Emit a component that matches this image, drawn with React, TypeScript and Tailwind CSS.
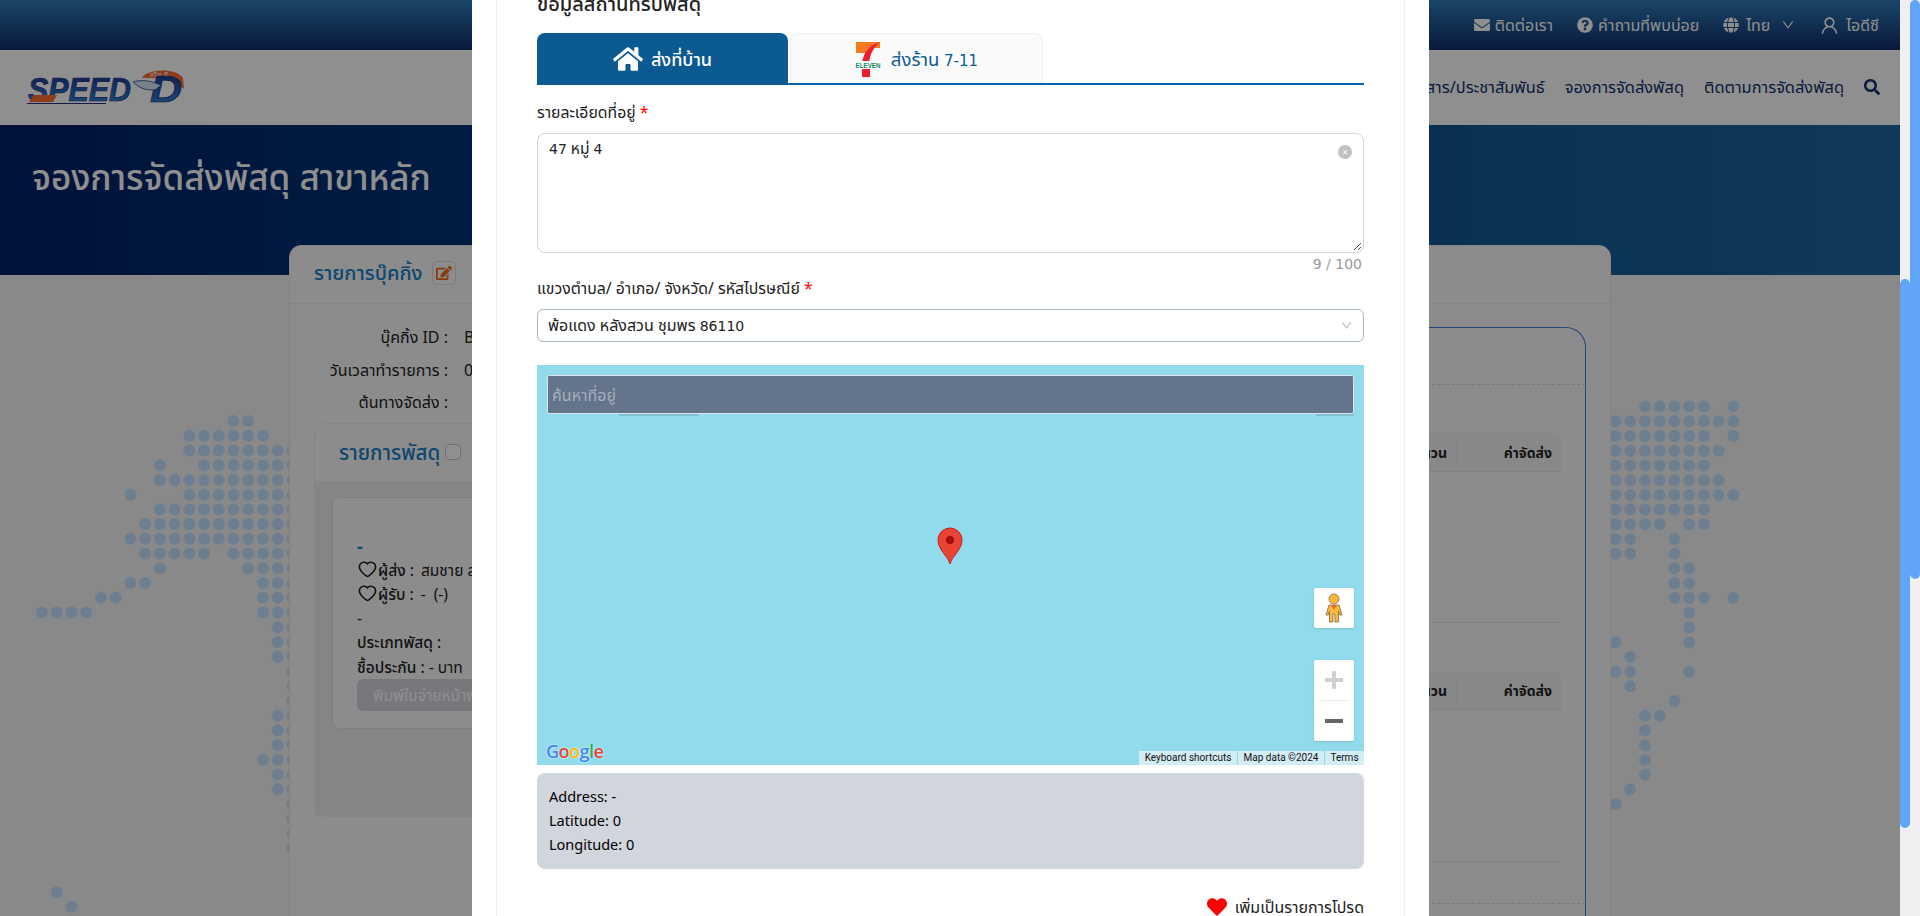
import { FaHome, FaEnvelope, FaQuestionCircle, FaGlobe, FaSearch, FaEdit, FaHeart } from "react-icons/fa";
import { AiOutlineDown, AiOutlineUser, AiOutlineHeart } from "react-icons/ai";

const font = "font-['Noto_Sans','Noto_Sans_Thai','Liberation_Sans',sans-serif]";

const range = (a: number, b: number) => Array.from({ length: b - a + 1 }, (_, i) => a + i);
const leftRows: [number, number[]][] = [
  [0, [13, 14]], [1, range(10, 15)], [2, range(10, 17)], [3, [8, ...range(11, 17)]], [4, range(8, 17)],
  [5, [6, ...range(10, 17)]], [6, range(8, 17)], [7, range(7, 17)], [8, range(6, 17)],
  [9, [...range(7, 11), ...range(13, 17)]], [10, [8, ...range(14, 17)]], [11, [6, 7, 15, 16, 17]],
  [12, [4, 5, 15, 16, 17]], [13, [0, 1, 2, 3, 15, 16, 17]], [14, [16, 17]], [15, [16, 17]], [16, [16, 17]],
  [17, [17]], [18, [17]], [19, [17]], [20, [16, 17]], [21, [16, 17]], [22, [16, 17]], [23, [15, 16, 17]],
  [24, [16, 17]], [25, [16, 17]], [26, [17]], [27, [17]], [28, [17]], [29, [17]], [32, [1]], [33, [2]],
];
const rightRows: [number, number[]][] = [
  [0, [2, 3, 4, 5, 6, 8]], [1, range(0, 8)], [2, [...range(0, 6), 8]], [3, range(0, 7)], [4, range(0, 6)],
  [5, range(0, 7)], [6, range(0, 8)], [7, range(0, 6)], [8, [0, 1, 2, 3, 5, 6]], [9, [0, 1, 4]], [10, [0, 1, 4]],
  [11, [4, 5]], [12, [4, 5]], [13, [4, 5, 6, 8]], [14, [5]], [15, [5]], [16, [0, 5]], [17, [1]], [18, [0, 1, 5]],
  [19, [1]], [20, [4]], [21, [2, 3]], [22, [2]], [23, [2]], [24, [2]], [25, [2]], [26, [1]], [27, [0]],
];

function Dots({ rows, x0, y0 }: { rows: [number, number[]][]; x0: number; y0: number }) {
  return (
    <svg className="absolute left-0 top-0" width="1900" height="916">
      {rows.flatMap(([r, cols]) =>
        cols.map((c) => <circle key={r + "-" + c} cx={x0 + c * 14.73} cy={y0 + r * 14.73} r="6" fill="#c2e3ff" />)
      )}
    </svg>
  );
}

function Logo() {
  return (
    <svg width="160" height="38" viewBox="0 0 160 38">
      <defs>
        <linearGradient id="lg" x1="0" x2="0" y1="0" y2="1">
          <stop offset="0" stopColor="#1f2f86" />
          <stop offset="1" stopColor="#2d8fe0" />
        </linearGradient>
      </defs>
      <path d="M116 9 C120 0 150 -2 157 9 L158 20 L150 14 C142 9 128 9 116 9 Z" fill="#ff6a33" />
      <text x="124" y="7.5" fontSize="6" fill="#fff" fontFamily="Noto Sans, sans-serif">สปีด ดี</text>
      <text x="2" y="32" fontSize="33" fontWeight="700" fontStyle="italic" fill="url(#lg)" stroke="#1f2f86" strokeWidth="0.7" fontFamily="Liberation Sans, sans-serif" textLength="103" lengthAdjust="spacingAndGlyphs">SPEED</text>
      <path d="M3 33 L27 33 L31 26 L8 26 Z" fill="#ff6a33" />
      <path d="M1 34.5 L80 34.5" stroke="#2a2f86" strokeWidth="1.2" />
      <text x="124" y="33" fontSize="36" fontWeight="700" fontStyle="italic" fill="url(#lg)" stroke="#1f2f86" strokeWidth="0.7" fontFamily="Liberation Sans, sans-serif" textLength="32" lengthAdjust="spacingAndGlyphs">D</text>
      <path d="M107 13 C116 10 128 12 136 17 C130 18 132 21 127 21 C118 21 112 18 107 13Z" fill="#d8e4f4" stroke="#2a3f8c" strokeWidth="0.8" />
    </svg>
  );
}

function SevenEleven() {
  return (
    <svg width="26" height="36" viewBox="0 0 26 36">
      <path d="M1 1 H25 V7 H1 Z" fill="#f47b20" />
      <path d="M1 7 H17 L13 12 H1 Z" fill="#f47b20" />
      <path d="M25 1 C20 5 15 12 14 22 H7 C8 14 12 8 18 4 L25 1Z" fill="#ee1c2e" />
      <rect x="7" y="27" width="8" height="9" fill="#ee1c2e" />
      <rect x="0" y="20" width="26" height="8" fill="#fff" />
      <text x="13" y="27" textAnchor="middle" fontSize="7.5" fontWeight="700" fill="#0a8a5c" fontFamily="Liberation Sans, sans-serif" textLength="25" lengthAdjust="spacingAndGlyphs">ELEVEN</text>
    </svg>
  );
}

function Pegman() {
  return (
    <svg width="18" height="30" viewBox="0 0 18 30">
      <circle cx="9" cy="6" r="5" fill="#fdb83c" stroke="#7d6a4a" strokeWidth="0.8" />
      <path d="M4 12 H14 L17 22 L14.5 22 L13.5 18 V29 H10 V21 H8 V29 H4.5 V18 L3.5 22 L1 22 Z" fill="#fdb83c" stroke="#7d6a4a" strokeWidth="0.8" />
      <path d="M6 12 H12 L9 17 Z" fill="#e8702a" />
    </svg>
  );
}

function Pin() {
  return (
    <svg width="28" height="38" viewBox="0 0 28 38">
      <path d="M14 37 C12 29 2 23 2 13 A12 12 0 0 1 26 13 C26 23 16 29 14 37Z" fill="#ea4335" stroke="#c5221f" strokeWidth="1" />
      <circle cx="14" cy="13" r="4.2" fill="#a50e0e" />
    </svg>
  );
}

function Num({ children }: { children: React.ReactNode }) {
  return <span className="font-['DejaVu_Sans',sans-serif] text-[14px]">{children}</span>;
}

function TableHead() {
  return (
    <div className="flex h-[39px] items-center justify-end rounded-t-lg border-b border-[#e4e4e4] bg-[#f2f2f2] text-[14px] font-bold text-[#222]">
      <span className="pr-[9px]">จำนวน</span>
      <span className="flex h-[24px] w-[105px] items-center justify-end border-l border-[#e8e8e8] pr-[9px]">ค่าจัดส่ง</span>
    </div>
  );
}

function Page() {
  return (
    <div className="relative h-[916px] w-[1900px] overflow-hidden bg-[#f5f5f5]">
      <div className="flex h-[50px] items-center justify-end gap-[24px] bg-gradient-to-b from-[#2e7dba] to-[#122e6b] pr-[21px] text-[16px] text-white">
        <span className="flex items-center gap-[5px]"><FaEnvelope className="text-[16px]" /><span>ติดต่อเรา</span></span>
        <span className="flex items-center gap-[5px]"><FaQuestionCircle className="text-[16px]" /><span>คำถามที่พบบ่อย</span></span>
        <span className="flex items-center gap-[7px]">
          <FaGlobe className="text-[16px]" />
          <span>ไทย</span>
          <AiOutlineDown className="ml-[4px] text-[14px]" />
        </span>
        <span className="flex items-center gap-[6px]"><AiOutlineUser className="text-[21px]" /><span>ไอดีซี</span></span>
      </div>
      <div className="flex h-[75px] items-center justify-between bg-white pl-[26px] pr-[20px] text-[16.4px] text-[#12306b]">
        <Logo />
        <div className="flex items-center gap-[20px]">
          <span>ข่าวสาร/ประชาสัมพันธ์</span>
          <span>จองการจัดส่งพัสดุ</span>
          <span>ติดตามการจัดส่งพัสดุ</span>
          <FaSearch className="text-[16px]" />
        </div>
      </div>
      <div className="h-[150px] bg-gradient-to-r from-[#002268] to-[#1b68a3] pl-[32px] pt-[27px] text-[35px] font-medium leading-[50px] text-white">
        จองการจัดส่งพัสดุ สาขาหลัก
      </div>
      <Dots rows={leftRows} x0={42} y0={421} />
      <Dots rows={rightRows} x0={1615.5} y0={406.5} />
      <div className="relative z-10 mx-auto -mt-[30px] h-[800px] w-[1322px] rounded-t-xl border border-[#ececec] bg-[#fafafa]">
        <div className="flex h-[58px] items-center border-b border-[#ececec] pb-[3px] pl-[24px]">
          <span className="text-[20px] font-medium text-[#1a7fc4]">รายการบุ๊คกิ้ง</span>
          <span className="ml-[10px] flex h-[24px] w-[24px] items-center justify-center rounded border border-[#ddd] text-[#f06a1a]">
            <FaEdit className="text-[16px]" />
          </span>
        </div>
        <div className="relative flex">
          <div className="w-[640px] shrink-0 pl-[24px]">
            <div className="grid grid-cols-[134px_1fr] gap-x-[16px] pt-[17px] text-[16px] leading-[32.5px] text-[#222]">
              <span className="text-right">บุ๊คกิ้ง ID :</span>
              <span>B0001</span>
              <span className="text-right">วันเวลาทำรายการ :</span>
              <span>01/01/2024</span>
              <span className="text-right">ต้นทางจัดส่ง :</span>
              <span />
            </div>
            <div className="mt-[4px] h-[394px] rounded-xl border border-[#ececec]">
              <div className="flex h-[57px] items-center gap-[5px] pl-[24px]">
                <span className="text-[20.5px] font-medium text-[#1a7fc4]">รายการพัสดุ</span>
                <span className="h-[16px] w-[16px] rounded border border-[#ccc] bg-white" />
              </div>
              <div className="h-[335px] bg-[#eeeeee] pl-[17px] pt-[16px]">
                <div className="h-[232px] rounded-lg border border-[#e2e2e2] bg-[#fafafa] pl-[24px] pt-[36px] text-[15.5px] leading-[24.3px] text-[#222]">
                  <div className="text-[18px] font-bold leading-[24px] text-[#1a7fc4]">-</div>
                  <div className="flex items-center"><AiOutlineHeart className="text-[21px]" /><span className="font-medium">ผู้ส่ง :</span><span className="ml-[7px]">สมชาย สมชาย</span></div>
                  <div className="flex items-center"><AiOutlineHeart className="text-[21px]" /><span className="font-medium">ผู้รับ :</span><span className="ml-[7px]">-&nbsp; (-)</span></div>
                  <div>-</div>
                  <div className="font-medium">ประเภทพัสดุ :</div>
                  <div><span className="font-medium">ชื้อประกัน :</span> - บาท</div>
                  <button className="h-[32px] rounded-md bg-[#d4d7de] px-[16px] text-[15.5px] text-white">พิมพ์ใบจ่ายหน้าพัสดุ</button>
                </div>
              </div>
            </div>
          </div>
          <div className="ml-auto mr-[24px] mt-[23px] h-[700px] w-[640px] rounded-tr-[20px] border-r border-t border-[#3d80d8] pr-[24px]">
            <div className="-mr-[24px] h-[57px] border-b border-dashed border-[#d8d8d8]" />
            <div className="mt-[48px]"><TableHead /></div>
            <div className="mt-[150px] border-b border-[#e8e8e8]" />
            <div className="mt-[48px]"><TableHead /></div>
            <div className="mt-[151px] border-b border-[#e8e8e8]" />
            <div className="-mr-[24px] mt-[41px] border-b border-dashed border-[#d8d8d8]" />
          </div>
        </div>
      </div>
      <div className="absolute inset-0 z-20 bg-black/[0.44]" />
      <Modal />
    </div>
  );
}

function Modal() {
  return (
    <div className="absolute bottom-0 left-[472px] top-0 z-30 w-[957px] overflow-hidden bg-white px-[24px]">
      <div className="h-[1000px] border-x border-[#eeeeee] px-[40px]">
        <div className="-mt-[9px] h-[26px] text-[20px] font-medium leading-[26px] text-[#222]">ข้อมูลสถานที่รับพัสดุ</div>
        <div className="mt-[16px] flex h-[52px] gap-[2px] border-b-2 border-[#0b63ad]">
          <div className="flex h-[52px] w-[251px] items-center justify-center gap-[8px] rounded-t-lg bg-[#0c5a92] text-[18px] font-medium text-white">
            <FaHome className="text-[30px]" />
            <span>ส่งที่บ้าน</span>
          </div>
          <div className="flex h-[50px] w-[253px] items-center justify-center gap-[10px] rounded-t-lg border border-b-0 border-[#eeeeee] bg-[#fafafa] text-[18.5px] text-[#0c5a92]">
            <SevenEleven />
            <span>ส่งร้าน <span className="font-['DejaVu_Sans',sans-serif] text-[15px]">7-11</span></span>
          </div>
        </div>
        <div className="mt-[15px] h-[24px] text-[15.8px] leading-[24px] text-[#222]">รายละเอียดที่อยู่ <span className="text-[#ff0000]">*</span></div>
        <div className="relative mt-[9px] h-[120px] rounded-lg border border-[#d4d4d4] px-[11px] py-[3px] text-[15.5px] leading-[22px] text-[#222]">
          <Num>47</Num> หมู่ <Num>4</Num>
          <span className="absolute right-[11px] top-[11px] flex h-[14px] w-[14px] items-center justify-center rounded-full bg-[#c0c0c0] text-[10px] leading-none text-white">×</span>
          <svg className="absolute bottom-[1px] right-[1px]" width="9" height="9" viewBox="0 0 9 9">
            <path d="M8 1 L1 8 M8 5 L5 8" stroke="#555" strokeWidth="1" />
          </svg>
        </div>
        <div className="h-[22px] pr-[2px] text-right font-['DejaVu_Sans',sans-serif] text-[14px] leading-[22px] text-[#999]">9 / 100</div>
        <div className="mt-[1px] h-[24px] text-[15.8px] leading-[24px] text-[#222]">แขวงตำบล/ อำเภอ/ จังหวัด/ รหัสไปรษณีย์ <span className="text-[#ff0000]">*</span></div>
        <div className="mt-[9px] flex h-[33px] items-center justify-between rounded-md border border-[#a9b8c6] px-[10px] text-[16px] leading-[30px] text-[#222]">
          <span>พ้อแดง หลังสวน ชุมพร <Num>86110</Num></span>
          <AiOutlineDown className="text-[13px] text-[#bbb]" />
        </div>
        <div className="relative mt-[23px] h-[400px] overflow-hidden bg-[#92dbec]">
          <div className="absolute left-[10px] right-[10px] top-[10px] flex h-[39px] items-center rounded-[2px] border border-[#dde3ea] bg-[#64748b] pl-[4px] text-[16px] text-[#a5afbd]">ค้นหาที่อยู่</div>
          <div className="absolute left-[82px] top-[49px] h-[2px] w-[80px] bg-[#7fc0d2]" />
          <div className="absolute right-[10px] top-[49px] h-[2px] w-[38px] bg-[#7fc0d2]" />
          <div className="absolute left-[399px] top-[162px]"><Pin /></div>
          <div className="absolute right-[10px] top-[223px] flex h-[40px] w-[40px] items-center justify-center rounded-[2px] bg-white shadow-sm"><Pegman /></div>
          <div className="absolute right-[10px] top-[295px] flex h-[81px] w-[40px] flex-col items-center rounded-[2px] bg-white shadow-sm">
            <div className="flex h-[40px] w-full items-center justify-center">
              <div className="relative h-[18px] w-[18px]">
                <div className="absolute left-0 top-[7px] h-[4px] w-[18px] bg-[#d0d0d0]" />
                <div className="absolute left-[7px] top-0 h-[18px] w-[4px] bg-[#d0d0d0]" />
              </div>
            </div>
            <div className="h-px w-[30px] bg-[#e6e6e6]" />
            <div className="flex h-[40px] w-full items-center justify-center">
              <div className="h-[4px] w-[18px] bg-[#666]" />
            </div>
          </div>
          <div className="absolute bottom-[4px] left-[9px] font-['Open_Sans',sans-serif] text-[18px] font-semibold leading-[20px] tracking-[-0.5px] [text-shadow:0_0_2px_#fff]">
            <span className="text-[#4285f4]">G</span><span className="text-[#ea4335]">o</span><span className="text-[#fbbc05]">o</span><span className="text-[#4285f4]">g</span><span className="text-[#34a853]">l</span><span className="text-[#ea4335]">e</span>
          </div>
          <div className="absolute bottom-0 right-0 flex h-[14px] items-center gap-px font-['Roboto',sans-serif] text-[10px] leading-[14px] text-[#111]">
            <span className="w-[98px] bg-[#d3edf5] text-center">Keyboard shortcuts</span>
            <span className="w-[86px] bg-[#d3edf5] text-center">Map data ©2024</span>
            <span className="w-[39px] bg-[#d3edf5] text-center">Terms</span>
          </div>
        </div>
        <div className="mt-[8px] h-[96px] rounded-lg bg-gray-300 px-[12px] py-[11px] text-[14.5px] leading-[24px] text-black">
          <div>Address: -</div>
          <div>Latitude: 0</div>
          <div>Longitude: 0</div>
        </div>
        <div className="mt-[26px] flex items-center justify-end gap-[8px] text-[16px] text-[#222]">
          <FaHeart className="text-[20px] text-[#ff0000]" />
          <span>เพิ่มเป็นรายการโปรด</span>
        </div>
      </div>
    </div>
  );
}

function Scroll({ top, height }: { top: number; height: number }) {
  return (
    <div className="h-[916px] w-[10px] bg-[#f0f0f0]">
      <div className="w-[10px] rounded-full bg-[#60a5fa]" style={{ marginTop: top, height }} />
    </div>
  );
}

export default function App() {
  return (
    <div className={"flex h-[916px] w-[1920px] overflow-hidden " + font}>
      <Page />
      <Scroll top={279} height={549} />
      <Scroll top={0} height={579} />
    </div>
  );
}
